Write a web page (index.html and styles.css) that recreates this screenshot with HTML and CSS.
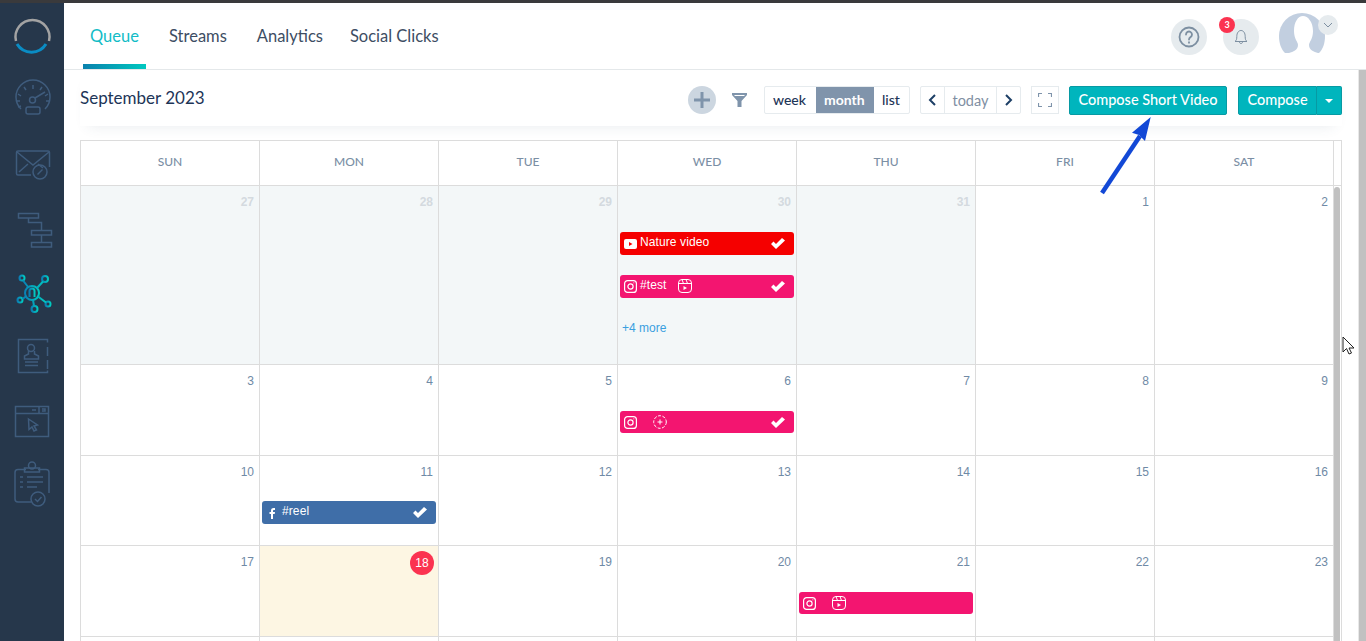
FILE: index.html
```html
<!DOCTYPE html>
<html>
<head>
	<title>Queue</title>
	<meta charset="utf-8">
	<link rel="stylesheet" href="styles.css">
</head>
<body>
<div class="topline"></div>
<div class="app">
	<div class="sidebar">
		<svg class="slot" viewBox="0 0 64 64">
			<path d="M16 38a17 17 0 1 1 33 0" fill="none" stroke="#a3a3a3" stroke-width="2.5"/>
			<path d="M17 41a17 17 0 0 0 29 0" fill="none" stroke="#0a8cc4" stroke-width="3"/>
		</svg>
		<svg class="slot line" viewBox="0 0 64 64">
			<path d="M21 42a17 17 0 1 1 24 0"/>
			<path d="M33 18v4M24 20l2 3M42 20l-2 3M18 27l3 2M48 27l-3 2M16 34h4M50 34h-4M18 40l3-1"/>
			<circle cx="32.500" cy="33" r="3"/>
			<path d="M35 31l10-6"/>
			<rect x="26" y="40" width="14" height="7" rx="2"/>
		</svg>
		<svg class="slot line" viewBox="0 0 64 64">
			<path d="M31 44H18a1.500 1.500 0 0 1-1.500-1.500V21.500A1.500 1.500 0 0 1 18 20h30a1.500 1.500 0 0 1 1.500 1.500V36"/>
			<path d="M17 21l16 13 16-13M19 41l9-8M38 33l5 4"/>
			<circle cx="40" cy="41" r="7"/>
			<path d="M37.500 43.500l5-5"/>
		</svg>
		<svg class="slot line" viewBox="0 0 64 64">
			<rect x="18.500" y="18.500" width="20" height="4.500"/>
			<rect x="31.500" y="35.500" width="20" height="4.500"/>
			<rect x="31.500" y="47.500" width="20" height="4.500"/>
			<path d="M28.500 23v4.500h13v8M41.500 40v7.500"/>
		</svg>
		<svg class="slot" viewBox="0 0 64 64">
			<defs>
				<linearGradient id="net" x1="0" y1="0" x2="1" y2="0">
					<stop offset="0" stop-color="#0a80b5"/>
					<stop offset="1" stop-color="#00c9c0"/>
				</linearGradient>
			</defs>
			<g fill="none" stroke="url(#net)" stroke-width="2">
				<circle cx="32" cy="34" r="7"/>
				<path d="M29.500 38v-6a2.500 2.500 0 0 1 5 0v6"/>
				<circle cx="22" cy="19" r="2.500"/>
				<circle cx="45" cy="20" r="3"/>
				<circle cx="20" cy="41" r="2.500"/>
				<circle cx="48" cy="45" r="2.500"/>
				<circle cx="34.500" cy="50" r="3"/>
				<path d="M23 21.500l5.500 7M43 22.500l-6 6.500M22.500 40l4-3M38 37.500l8 6M33 41l1 6"/>
			</g>
		</svg>
		<svg class="slot line" viewBox="0 0 64 64">
			<path d="M47.500 19.500v-3h-29v33h29v-2"/>
			<path d="M47.500 24v9M47.500 37v9"/>
			<circle cx="31" cy="25" r="3.500"/>
			<path d="M28.500 28v3l-4 2v3h14v-3l-4-2v-3M25 39h13M25 42.500h13"/>
		</svg>
		<svg class="slot line" viewBox="0 0 64 64">
			<rect x="15.500" y="19.500" width="33" height="30"/>
			<path d="M15.500 26.500h33M32 23h4M39 20v6M42 22h3v2h-3"/>
			<path d="M28.500 32l9 6-3.500 1 2.500 4-2.500 1-2-4-3 2.500z"/>
		</svg>
		<svg class="slot line" viewBox="0 0 64 64">
			<path d="M26 18.500h-8a3 3 0 0 0-3 3V48a3 3 0 0 0 3 3h13M38 18.500h8a3 3 0 0 1 3 3V42"/>
			<rect x="24.500" y="17" width="15" height="4"/>
			<circle cx="32" cy="14.500" r="3.500"/>
			<path d="M20 26h3M20 31h3M20 36h3M27 26h16M27 31h16M27 36h10"/>
			<circle cx="38" cy="48" r="7"/>
			<path d="M35 48l2.500 2.500 4-4.500"/>
		</svg>
	</div>

	<div class="main">
		<div class="topnav">
			<ul class="tabs">
				<li class="active">Queue</li>
				<li>Streams</li>
				<li>Analytics</li>
				<li>Social Clicks</li>
			</ul>
			<div class="topicons">
				<div class="roundbtn">
					<svg width="22" height="22" viewBox="0 0 22 22" fill="none" stroke="#7d8fa1" stroke-width="1.800">
						<circle cx="11" cy="11" r="9.500"/>
						<path d="M8 8.500a3 3 0 1 1 4.500 2.600c-1 .6-1.500 1-1.500 2.400" stroke-linecap="round"/>
						<path d="M11 15.500v2"/>
					</svg>
				</div>
				<div class="roundbtn bell">
					<svg width="14" height="16" viewBox="0 0 14 16" fill="none" stroke="#7d8fa1" stroke-width="1">
						<path d="M1 12.500c1.500-1 1.800-2.500 1.800-5C2.800 4 4.500 1.500 7 1.500s4.200 2.500 4.200 6c0 2.500.3 4 1.800 5zM5.500 13c0 2 3 2 3 0"/>
					</svg>
					<span class="badge">3</span>
				</div>
				<div class="avatar">
					<svg width="46" height="40" viewBox="0 0 46 40">
						<path d="M6 40C2 36 0 30 0 23a23 23 0 0 1 46 0c0 7-2 13-6 17z" fill="#c2cfe0"/>
						<path d="M10 40c4-1 9-3 9-8 0-3-4-6-4-14 0-9 4-15 9-15s10 6 10 15c0 8-4 11-4 14 0 5 5 7 9 8z" fill="#fff"/>
					</svg>
					<span class="avatar-arrow">
						<svg width="10" height="6" viewBox="0 0 10 6" fill="none" stroke="#7d8fa1" stroke-width="1"><path d="M1 1l4 4 4-4"/></svg>
					</span>
				</div>
			</div>
		</div>

		<div class="content">
			<div class="page">
				<div class="toolbar">
					<h2 class="title">September 2023</h2>
					<div class="tools">
						<div class="plus">
							<svg width="16" height="16" viewBox="0 0 16 16"><path d="M6.500 0h3v6.500H16v3H9.500V16h-3V9.500H0v-3h6.500z" fill="#7f94ab"/></svg>
						</div>
						<svg class="filter" width="15" height="14" viewBox="0 0 15 14">
							<path d="M0 0h15v2L9.500 8v6h-4V8L0 2z" fill="#7f94ab"/>
							<path d="M2.500 2.500h10" stroke="#fff" stroke-width="1"/>
						</svg>
						<div class="btngroup views">
							<span>week</span>
							<span class="on">month</span>
							<span>list</span>
						</div>
						<div class="btngroup pager">
							<span class="arrow"><svg width="9" height="12" viewBox="0 0 9 12" fill="none" stroke="#1d3f66" stroke-width="2"><path d="M7 1L2 6l5 5"/></svg></span>
							<span class="today">today</span>
							<span class="arrow"><svg width="9" height="12" viewBox="0 0 9 12" fill="none" stroke="#1d3f66" stroke-width="2"><path d="M2 1l5 5-5 5"/></svg></span>
						</div>
						<div class="fullscreen">
							<svg width="14" height="14" viewBox="0 0 14 14" fill="none" stroke="#7f94ab" stroke-width="1.200"><path d="M0.500 4V.5H4M10 .5h3.500V4M13.500 10v3.500H10M4 13.500H.5V10"/></svg>
						</div>
						<div class="tealbtn short">Compose Short Video</div>
						<div class="compose">
							<div class="tealbtn left">Compose</div>
							<div class="tealbtn caret"><i></i></div>
						</div>
					</div>
				</div>

				<div class="calendar">
					<div class="calhead">
						<div>SUN</div><div>MON</div><div>TUE</div><div>WED</div><div>THU</div><div>FRI</div><div>SAT</div><div class="gap"></div>
					</div>
					<div class="calbody">
						<div class="weeks">
							<div class="week tall">
								<div class="day past"><span class="num">27</span></div>
								<div class="day past"><span class="num">28</span></div>
								<div class="day past"><span class="num">29</span></div>
								<div class="day past">
									<span class="num">30</span>
									<div class="event yt">
										<svg class="ic" width="13" height="10" viewBox="0 0 13 10"><rect width="13" height="10" rx="2" fill="#fff"/><path d="M5 3l3.500 2L5 7z" fill="#f00"/></svg>
										<span class="name">Nature video</span>
										<svg class="check" width="14" height="11" viewBox="0 0 14 11"><path d="M0 6l2.500-2.500L5 6l6-6 3 2.500L5 11z" fill="#fff"/></svg>
									</div>
									<div class="event ig">
										<svg class="ic" width="13" height="13" viewBox="0 0 13 13" fill="none" stroke="#fff" stroke-width="1.200"><rect x=".6" y=".6" width="11.800" height="11.800" rx="3"/><circle cx="6.500" cy="6.500" r="2.600"/><path d="M9.800 2.600v.6"/></svg>
										<span class="name">#test</span>
										<svg class="ic reel" width="14" height="14" viewBox="0 0 14 14" fill="none" stroke="#fff" stroke-width="1"><rect x=".5" y=".5" width="13" height="13" rx="3.500"/><path d="M.5 4.500h13M4 .5l1.500 4M8 .5l1.500 4"/><path d="M5.500 7l3.500 2-3.500 2z" fill="#fff" stroke="none"/></svg>
										<svg class="check" width="14" height="11" viewBox="0 0 14 11"><path d="M0 6l2.500-2.500L5 6l6-6 3 2.500L5 11z" fill="#fff"/></svg>
									</div>
									<div class="more">+4 more</div>
								</div>
								<div class="day past"><span class="num">31</span></div>
								<div class="day"><span class="num">1</span></div>
								<div class="day"><span class="num">2</span></div>
							</div>
							<div class="week">
								<div class="day"><span class="num">3</span></div>
								<div class="day"><span class="num">4</span></div>
								<div class="day"><span class="num">5</span></div>
								<div class="day">
									<span class="num">6</span>
									<div class="event ig short-bar">
										<svg class="ic" width="13" height="13" viewBox="0 0 13 13" fill="none" stroke="#fff" stroke-width="1.200"><rect x=".6" y=".6" width="11.800" height="11.800" rx="3"/><circle cx="6.500" cy="6.500" r="2.600"/><path d="M9.800 2.600v.6"/></svg>
										<svg class="ic story" width="14" height="14" viewBox="0 0 14 14" fill="none" stroke="#fff" stroke-width="1"><circle cx="7" cy="7" r="6.300" stroke-dasharray="3 1.500"/><path d="M7 4.500v5M4.500 7h5"/></svg>
										<svg class="check" width="14" height="11" viewBox="0 0 14 11"><path d="M0 6l2.500-2.500L5 6l6-6 3 2.500L5 11z" fill="#fff"/></svg>
									</div>
								</div>
								<div class="day"><span class="num">7</span></div>
								<div class="day"><span class="num">8</span></div>
								<div class="day"><span class="num">9</span></div>
							</div>
							<div class="week">
								<div class="day"><span class="num">10</span></div>
								<div class="day">
									<span class="num">11</span>
									<div class="event fb">
										<svg class="ic" width="13" height="12" viewBox="0 0 13 12"><path d="M5 12V7H3.500V5H5V3.500C5 2 6 1 7.500 1H9v2H8c-.6 0-1 .3-1 1v1h2L8.700 7H7v5z" fill="#fff"/></svg>
										<span class="name">#reel</span>
										<svg class="check" width="14" height="11" viewBox="0 0 14 11"><path d="M0 6l2.500-2.500L5 6l6-6 3 2.500L5 11z" fill="#fff"/></svg>
									</div>
								</div>
								<div class="day"><span class="num">12</span></div>
								<div class="day"><span class="num">13</span></div>
								<div class="day"><span class="num">14</span></div>
								<div class="day"><span class="num">15</span></div>
								<div class="day"><span class="num">16</span></div>
							</div>
							<div class="week">
								<div class="day"><span class="num">17</span></div>
								<div class="day now"><span class="num">18</span></div>
								<div class="day"><span class="num">19</span></div>
								<div class="day"><span class="num">20</span></div>
								<div class="day">
									<span class="num">21</span>
									<div class="event ig short-bar">
										<svg class="ic" width="13" height="13" viewBox="0 0 13 13" fill="none" stroke="#fff" stroke-width="1.200"><rect x=".6" y=".6" width="11.800" height="11.800" rx="3"/><circle cx="6.500" cy="6.500" r="2.600"/><path d="M9.800 2.600v.6"/></svg>
										<svg class="ic story" width="14" height="14" viewBox="0 0 14 14" fill="none" stroke="#fff" stroke-width="1"><rect x=".5" y=".5" width="13" height="13" rx="3.500"/><path d="M.5 4.500h13M4 .5l1.500 4M8 .5l1.500 4"/><path d="M5.500 7l3.500 2-3.500 2z" fill="#fff" stroke="none"/></svg>
									</div>
								</div>
								<div class="day"><span class="num">22</span></div>
								<div class="day"><span class="num">23</span></div>
							</div>
							<div class="week">
								<div class="day"></div><div class="day"></div><div class="day"></div><div class="day"></div><div class="day"></div><div class="day"></div><div class="day"></div>
							</div>
						</div>
						<div class="gutter"><div class="thumb"></div></div>
					</div>
				</div>
			</div>
			<div class="scrollbar"></div>
		</div>
	</div>
</div>

<svg class="callout" width="60" height="84" viewBox="0 0 60 84">
	<path d="M2 78L40 21" stroke="#1248d6" stroke-width="4.500" fill="none"/>
	<path d="M50.700 2L32 17.700l7 2.300 6 6z" fill="#1248d6"/>
</svg>
<svg class="cursor" width="14" height="20" viewBox="0 0 14 20">
	<path d="M1 1v15l3.500-3.500L7 18l2.500-1-2.500-5h5z" fill="#fff" stroke="#222" stroke-width="1"/>
</svg>
</body>
</html>
```

FILE: styles.css
```css
*{
	margin: 0;
	padding: 0;
	box-sizing: border-box;
}
html,body{
	height: 100%;
	overflow: hidden;
}
body{
	font-family: "Lato", "Liberation Sans", sans-serif;
	background-color: #fff;
	color: #1d3557;
	display: flex;
	flex-direction: column;
}
li{
	list-style: none;
}
.topline{
	height: 3px;
	flex: none;
	background-color: #3a3a3c;
}
.app{
	flex: 1;
	display: flex;
	min-height: 0;
}

/* left bar */
.sidebar{
	width: 64px;
	flex: none;
	background-color: #26374b;
}
.slot{
	display: block;
	width: 64px;
	height: 64px;
}
.line{
	fill: none;
	stroke: #3f5c7d;
	stroke-width: 1.500;
}

/* top tabs */
.main{
	flex: 1;
	min-width: 0;
	display: flex;
	flex-direction: column;
}
.topnav{
	height: 67px;
	flex: none;
	display: flex;
	justify-content: space-between;
	border-bottom: 1px solid #e4e8ea;
}
.tabs{
	display: flex;
	margin-left: 19px;
	gap: 16px;
}
.tabs li{
	height: 66px;
	padding: 23px 7px 0;
	font-size: 16.500px;
	line-height: 21px;
	color: #3d4d63;
}
.tabs li:last-child{
	margin-left: -3px;
}
.tabs .active{
	width: 63px;
	color: #12bcc6;
	border-bottom: 5px solid;
	border-image: linear-gradient(to right, #0a80ad, #00c9c0) 1;
}
.topicons{
	display: flex;
	align-items: flex-start;
	margin-right: 41px;
	padding-top: 16px;
}
.roundbtn{
	width: 36px;
	height: 36px;
	border-radius: 50%;
	background-color: #e6ebee;
	display: flex;
	align-items: center;
	justify-content: center;
	margin-right: 16px;
	position: relative;
}
.bell{
	margin-right: 20px;
}
.badge{
	position: absolute;
	top: -2px;
	left: -4px;
	width: 16px;
	height: 16px;
	border-radius: 50%;
	background-color: #fb3350;
	color: #fff;
	font-size: 9px;
	font-weight: bold;
	line-height: 16px;
	text-align: center;
}
.avatar{
	position: relative;
	width: 46px;
	height: 40px;
	margin-top: -6px;
}
.avatar svg{
	display: block;
}
.avatar-arrow{
	position: absolute;
	top: 2px;
	left: 39px;
	width: 20px;
	height: 20px;
	border-radius: 50%;
	background-color: #e6ebee;
	display: flex;
	align-items: center;
	justify-content: center;
}

/* toolbar */
.content{
	flex: 1;
	min-height: 0;
	display: flex;
}
.page{
	flex: 1;
	min-width: 0;
	padding: 0 16px;
	overflow: hidden;
}
.scrollbar{
	width: 8px;
	flex: none;
	background-color: #c1c1c1;
	border-left: 1px solid #e8e8e8;
}
.toolbar{
	height: 56px;
	display: flex;
	justify-content: space-between;
	padding-top: 16px;
	box-shadow: 0 8px 14px -8px rgba(60,80,110,0.12);
}
.title{
	font-size: 17px;
	font-weight: normal;
	line-height: 22px;
	padding-top: 1px;
	color: #1d3557;
}
.tools{
	display: flex;
	align-items: flex-start;
}
.plus{
	width: 28px;
	height: 28px;
	border-radius: 50%;
	background-color: #ccd6e0;
	display: flex;
	align-items: center;
	justify-content: center;
	margin-right: 16px;
}
.filter{
	margin: 7px 17px 0 0;
}
.btngroup{
	display: flex;
	height: 28px;
	border: 1px solid #e6ebee;
	border-radius: 2px;
	font-size: 14px;
	line-height: 25px;
	color: #1d3557;
}
.views{
	margin-right: 10px;
	width: 146px;
}
.views span{
	padding: 0 8px;
	font-weight: 500;
}
.views span:first-child{
	width: 51px;
}
.views .on{
	width: 58px;
	background-color: #8094ab;
	color: #fff;
	font-weight: bold;
}
.pager{
	width: 101px;
	margin-right: 10px;
}
.pager span{
	display: flex;
	align-items: center;
	justify-content: center;
}
.pager .arrow{
	width: 23px;
}
.pager .today{
	flex: 1;
	font-size: 14.500px;
	color: #7f8fa3;
	border-left: 1px solid #e6ebee;
	border-right: 1px solid #e6ebee;
}
.fullscreen{
	width: 28px;
	height: 28px;
	border: 1px solid #e6ebee;
	display: flex;
	align-items: center;
	justify-content: center;
	margin-right: 10px;
}
.tealbtn{
	height: 29px;
	background-color: #00b5bd;
	border: 1px solid #079aa3;
	border-radius: 2px;
	color: #fff;
	font-size: 14.500px;
	font-weight: 500;
	line-height: 25px;
	text-align: center;
}
.short{
	width: 158px;
	margin-right: 11px;
}
.compose{
	display: flex;
}
.left{
	width: 79px;
	border-radius: 2px 0 0 2px;
}
.caret{
	width: 25px;
	border-left: none;
	border-radius: 0 2px 2px 0;
	display: flex;
	align-items: center;
	justify-content: center;
}
.caret i{
	width: 0;
	height: 0;
	border-left: 4px solid transparent;
	border-right: 4px solid transparent;
	border-top: 4px solid #fff;
}

/* calendar */
.calendar{
	margin-top: 14px;
	width: 1262px;
	border-top: 1px solid #dcdcdc;
	border-left: 1px solid #dcdcdc;
	border-right: 1px solid #dcdcdc;
}
.calhead{
	display: grid;
	grid-template-columns: repeat(7, 179px) 1fr;
	height: 45px;
	border-bottom: 1px solid #dcdcdc;
}
.calhead div{
	border-right: 1px solid #dcdcdc;
	text-align: center;
	font-size: 12px;
	font-weight: 500;
	line-height: 42px;
	color: #7b8fa5;
}
.calhead .gap{
	border-right: none;
}
.calbody{
	display: flex;
}
.weeks{
	width: 1253px;
	flex: none;
}
.week{
	display: grid;
	grid-template-columns: repeat(7, 179px);
	height: 91px;
	border-bottom: 1px solid #dcdcdc;
}
.week:nth-child(3){
	height: 90px;
}
.week:nth-child(3) .num{
	height: 36px;
}
.week.tall{
	height: 179px;
}
.day{
	border-right: 1px solid #dcdcdc;
	padding-top: 9px;
	text-align: right;
	min-width: 0;
}
.past{
	background-color: #f3f7f8;
}
.now{
	background-color: #fdf6e3;
}
.num{
	display: block;
	height: 37px;
	padding-right: 5px;
	font-family: "Liberation Sans", sans-serif;
	font-size: 12px;
	line-height: 14px;
	color: #6f8aa6;
}
.past .num{
	color: #d4dadf;
	font-weight: bold;
}
.now .num{
	width: 24px;
	height: 24px;
	margin: -4px 4px 17px auto;
	padding: 0;
	border-radius: 50%;
	background-color: #fb3350;
	color: #fff;
	line-height: 24px;
	text-align: center;
}
.event{
	display: flex;
	align-items: center;
	height: 23px;
	margin: 0 2px 20px;
	padding: 0 9px 0 4px;
	border-radius: 3px;
	color: #fff;
	font-family: "Liberation Sans", sans-serif;
	font-size: 12px;
	letter-spacing: 0.100px;
	text-align: left;
}
.short-bar{
	height: 22px;
}
.event .name{
	margin-left: 3px;
	margin-top: -4px;
}
.event .ic{
	flex: none;
}
.event .reel{
	margin-left: 11px;
	margin-top: -1px;
}
.event .story{
	margin-left: 16px;
	margin-top: -1px;
}
.event .check{
	margin-left: auto;
}
.yt{
	background-color: #f50000;
}
.ig{
	background-color: #f31570;
}
.fb{
	background-color: #3f6ea8;
}
.more{
	margin-left: 4px;
	padding-top: 3px;
	font-family: "Liberation Sans", sans-serif;
	font-size: 12px;
	text-align: left;
	color: #3a9fe0;
}
.gutter{
	flex: 1;
	padding: 1px 1px 0 0;
	overflow: hidden;
}
.thumb{
	height: 600px;
	border-radius: 3px 3px 0 0;
	background-color: #c1c1c1;
}

/* drawn over the screenshot */
.callout{
	position: absolute;
	left: 1100px;
	top: 115px;
}
.cursor{
	position: absolute;
	left: 1342px;
	top: 336px;
}
```
